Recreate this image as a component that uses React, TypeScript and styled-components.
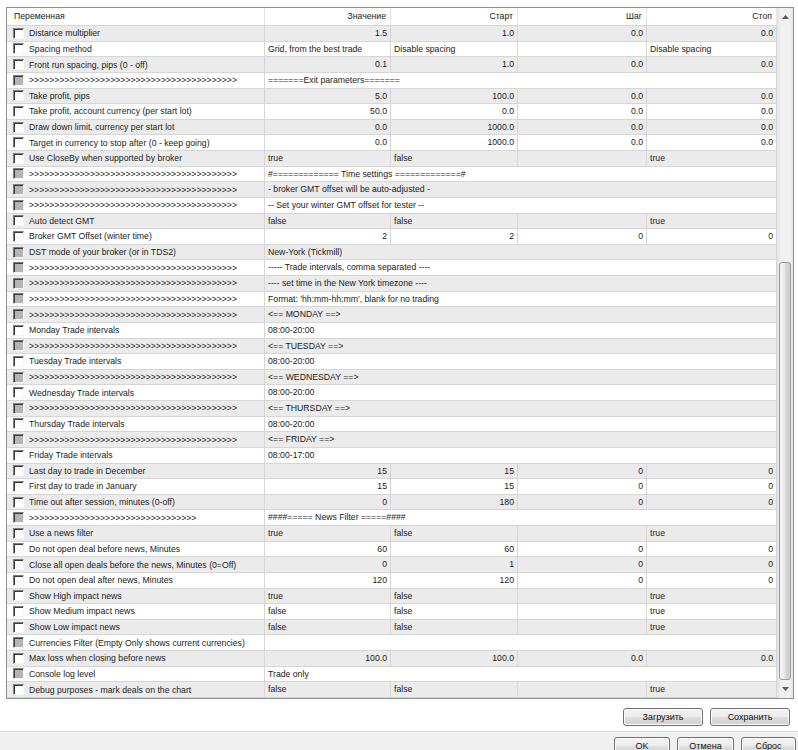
import React from 'react';
import styled, { createGlobalStyle } from 'styled-components';

// column widths of the inputs grid: name, value, start, step, stop
const COLS = '258px 126px 127px 129px 130px';
const ROW_H = 15.64;

const GlobalStyle = createGlobalStyle`
  html, body {
    margin: 0;
    padding: 0;
    background: #fff;
  }
  body {
    font-family: "Liberation Sans", Arial, sans-serif;
    font-size: 8.7px;
    color: #1b1b1b;
  }
`;

const Page = styled.div`
  width: 798px;
  height: 750px;
  overflow: hidden;
  display: flex;
  flex-direction: column;
`;

const Main = styled.div`
  padding: 7px 4px 0 6px;
`;

const Frame = styled.div`
  display: flex;
  border: 1px solid #8d8f92;
  background: #fff;
`;

const Grid = styled.div`
  width: 770px;
  display: flex;
  flex-direction: column;
`;

const HeaderRow = styled.div`
  display: grid;
  grid-template-columns: ${COLS};
  height: 18px;
  box-sizing: border-box;
  border-bottom: 1px solid #d5d5d5;
`;

const HeaderCell = styled.div<{ $align: 'left' | 'right' }>`
  padding: ${(p) => (p.$align === 'left' ? '0 0 0 7px' : '0 4px 0 0')};
  text-align: ${(p) => p.$align};
  line-height: 17px;
  border-right: 1px solid #e4e4e4;
  white-space: nowrap;
`;

const Row = styled.div<{ $shade: boolean }>`
  display: grid;
  grid-template-columns: ${COLS};
  height: ${ROW_H}px;
  background: ${(p) => (p.$shade ? '#ebebeb' : '#fff')};
`;

const NameCell = styled.div`
  display: flex;
  align-items: center;
  gap: 5px;
  padding-left: 6px;
  border-right: 1px solid #d6d6d6;
  border-bottom: 1px solid #d6d6d6;
  white-space: nowrap;
  overflow: hidden;
`;

const Cell = styled.div<{ $align: 'left' | 'right'; $span?: boolean }>`
  grid-column: ${(p) => (p.$span ? '2 / span 4' : 'auto')};
  padding: 0 3px;
  text-align: ${(p) => p.$align};
  line-height: ${ROW_H - 1}px;
  border-right: 1px solid #d6d6d6;
  border-bottom: 1px solid #d6d6d6;
  white-space: nowrap;
  overflow: hidden;
`;

const Check = styled.span<{ $disabled: boolean }>`
  flex: none;
  width: 11px;
  height: 11px;
  box-sizing: border-box;
  border: 1px solid;
  border-color: #7c7c7c #f6f6f6 #f6f6f6 #7c7c7c;
  box-shadow: inset 1px 1px 0 #3c3c3c;
  background: ${(p) => (p.$disabled ? '#b5b5b5' : '#fff')};
`;

const ScrollBar = styled.div`
  width: 16px;
  display: flex;
  flex-direction: column;
  background: linear-gradient(to right, #e2e2e2, #f1f1f1 25%, #f1f1f1 75%, #e6e6e6);
`;

const ScrollArrow = styled.div`
  height: 17px;
  display: flex;
  align-items: center;
  justify-content: center;
`;

const Track = styled.div`
  flex: 1;
  display: flex;
  flex-direction: column;
  padding: 0 2px 1px 2px;
`;

const Thumb = styled.div<{ $offset: number }>`
  flex: 1;
  margin-top: ${(p) => p.$offset}px;
  border: 1px solid #9b9b9b;
  border-radius: 3px;
  background: linear-gradient(to right, #f6f6f6, #e8e8e8 45%, #d9d9d9 55%, #cdcdcd);
`;

const ButtonBar = styled.div<{ $gray?: boolean }>`
  display: flex;
  justify-content: flex-end;
  gap: 7px;
  padding: ${(p) => (p.$gray ? '5px 2px 0 0' : '9px 8px 5px 0')};
  background: ${(p) => (p.$gray ? '#f0f0f0' : '#fff')};
  border-top: ${(p) => (p.$gray ? '1px solid #dadada' : 'none')};
  flex: ${(p) => (p.$gray ? 1 : 'none')};
`;

const Button = styled.button<{ $w: number }>`
  width: ${(p) => p.$w}px;
  height: 18px;
  padding: 0;
  border: 1px solid #707070;
  border-radius: 3px;
  box-shadow: inset 0 0 0 1px #fbfbfb;
  background: linear-gradient(#f3f3f3, #ececec 48%, #dedede 52%, #d0d0d0);
  font-family: "Liberation Sans", Arial, sans-serif;
  font-size: 9px;
  color: #111;
`;

type Param = {
  name: string;
  values: string[];
  align?: 'left' | 'right';
  span?: boolean;
  disabled?: boolean;
};

const ARROWS = '>'.repeat(41);

const sep = (text: string, arrows = ARROWS): Param => ({
  name: arrows,
  values: [text],
  span: true,
  disabled: true,
});

const num = (name: string, values: string[]): Param => ({ name, values, align: 'right' });
const txt = (name: string, values: string[]): Param => ({ name, values, align: 'left' });
const single = (name: string, value: string, disabled = false): Param => ({
  name,
  values: [value],
  span: true,
  disabled,
});

const params: Param[] = [
  num('Distance multiplier', ['1.5', '1.0', '0.0', '0.0']),
  txt('Spacing method', ['Grid, from the best trade', 'Disable spacing', '', 'Disable spacing']),
  num('Front run spacing, pips (0 - off)', ['0.1', '1.0', '0.0', '0.0']),
  sep('=======Exit parameters======='),
  num('Take profit, pips', ['5.0', '100.0', '0.0', '0.0']),
  num('Take profit, account currency (per start lot)', ['50.0', '0.0', '0.0', '0.0']),
  num('Draw down limit, currency per start lot', ['0.0', '1000.0', '0.0', '0.0']),
  num('Target in currency to stop after (0 - keep going)', ['0.0', '1000.0', '0.0', '0.0']),
  txt('Use CloseBy when supported by broker', ['true', 'false', '', 'true']),
  sep('#============= Time settings =============#'),
  sep('- broker GMT offset will be auto-adjusted -'),
  sep('-- Set your winter GMT offset for tester --'),
  txt('Auto detect GMT', ['false', 'false', '', 'true']),
  num('Broker GMT Offset (winter time)', ['2', '2', '0', '0']),
  single('DST mode of your broker (or in TDS2)', 'New-York (Tickmill)', true),
  sep('----- Trade intervals, comma separated ----'),
  sep('---- set time in the New York timezone ----'),
  sep("Format: 'hh:mm-hh:mm', blank for no trading"),
  sep('<== MONDAY ==>'),
  single('Monday Trade intervals', '08:00-20:00'),
  sep('<== TUESDAY ==>'),
  single('Tuesday Trade intervals', '08:00-20:00'),
  sep('<== WEDNESDAY ==>'),
  single('Wednesday Trade intervals', '08:00-20:00'),
  sep('<== THURSDAY ==>'),
  single('Thursday Trade intervals', '08:00-20:00'),
  sep('<== FRIDAY ==>'),
  single('Friday Trade intervals', '08:00-17:00'),
  num('Last day to trade in December', ['15', '15', '0', '0']),
  num('First day to trade in January', ['15', '15', '0', '0']),
  num('Time out after session, minutes (0-off)', ['0', '180', '0', '0']),
  sep('####===== News Filter =====####', '>'.repeat(33)),
  txt('Use a news filter', ['true', 'false', '', 'true']),
  num('Do not open deal before news, Minutes', ['60', '60', '0', '0']),
  num('Close all open deals before the news, Minutes (0=Off)', ['0', '1', '0', '0']),
  num('Do not open deal after news, Minutes', ['120', '120', '0', '0']),
  txt('Show High impact news', ['true', 'false', '', 'true']),
  txt('Show Medium impact news', ['false', 'false', '', 'true']),
  txt('Show Low impact news', ['false', 'false', '', 'true']),
  single('Currencies Filter (Empty Only shows current currencies)', '', true),
  num('Max loss when closing before news', ['100.0', '100.0', '0.0', '0.0']),
  single('Console log level', 'Trade only', true),
  txt('Debug purposes - mark deals on the chart', ['false', 'false', '', 'true']),
];

const Arrow = ({ down }: { down?: boolean }) => (
  <svg width="7" height="4" viewBox="0 0 7 4">
    <path d={down ? 'M0 0 L7 0 L3.5 4 Z' : 'M0 4 L7 4 L3.5 0 Z'} fill="#5c5c5c" />
  </svg>
);

export default function App() {
  return (
    <Page>
      <GlobalStyle />
      <Main>
        <Frame>
          <Grid>
            <HeaderRow>
              <HeaderCell $align="left">Переменная</HeaderCell>
              <HeaderCell $align="right">Значение</HeaderCell>
              <HeaderCell $align="right">Старт</HeaderCell>
              <HeaderCell $align="right">Шаг</HeaderCell>
              <HeaderCell $align="right">Стоп</HeaderCell>
            </HeaderRow>
            {params.map((p, i) => (
              <Row key={i} $shade={i % 2 === 0}>
                <NameCell>
                  <Check $disabled={!!p.disabled} />
                  {p.name}
                </NameCell>
                {p.span ? (
                  <Cell $align="left" $span>
                    {p.values[0]}
                  </Cell>
                ) : (
                  p.values.map((v, j) => (
                    <Cell key={j} $align={p.align ?? 'left'}>
                      {v}
                    </Cell>
                  ))
                )}
              </Row>
            ))}
          </Grid>
          <ScrollBar>
            <ScrollArrow>
              <Arrow />
            </ScrollArrow>
            <Track>
              <Thumb $offset={237} />
            </Track>
            <ScrollArrow>
              <Arrow down />
            </ScrollArrow>
          </ScrollBar>
        </Frame>
      </Main>
      <ButtonBar>
        <Button $w={80}>Загрузить</Button>
        <Button $w={80}>Сохранить</Button>
      </ButtonBar>
      <ButtonBar $gray>
        <Button $w={56}>OK</Button>
        <Button $w={57}>Отмена</Button>
        <Button $w={55}>Сброс</Button>
      </ButtonBar>
    </Page>
  );
}
